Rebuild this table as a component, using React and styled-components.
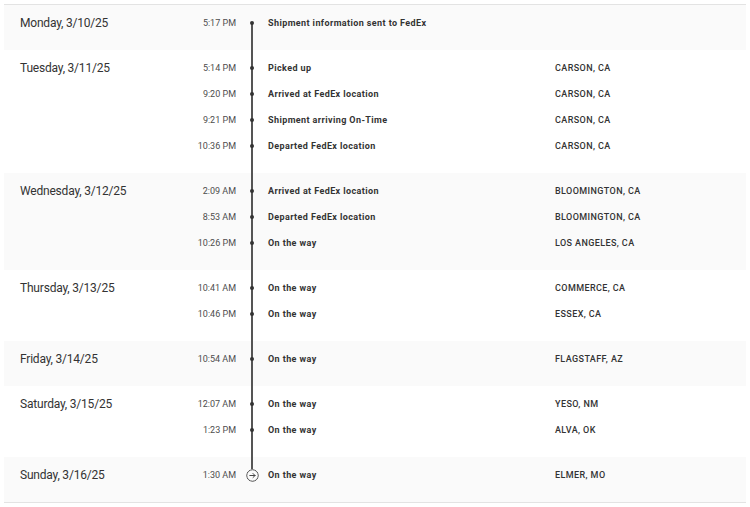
import styled, { createGlobalStyle } from 'styled-components';

const Global = createGlobalStyle`
  body {
    margin: 0;
    background: #fff;
    font-family: Roboto, "Liberation Sans", sans-serif;
  }
`

const Page = styled.div`
  padding: 4px 4px 0 4px;
`

const Table = styled.div`
  border-top: 1px solid #e3e3e3;
  border-bottom: 1px solid #e3e3e3;
`

const Section = styled.div`
  display: flex;
  background: ${p => (p.$shaded ? '#fafafa' : '#fff')};
  padding: 9.5px 0 18.5px 16px;
`

const DateCell = styled.div`
  width: 140px;
  height: 17px;
  display: flex;
  align-items: center;
  font-size: 12px;
  letter-spacing: -0.2px;
  color: #333;
`

const Rows = styled.div`
  flex: 1;
  display: flex;
  flex-direction: column;
  gap: 9px;
`

const Row = styled.div`
  display: grid;
  grid-template-columns: 76px 32px 287px 1fr;
  height: 17px;
  align-items: center;
  font-size: 9px;
  color: #333;
`

const Time = styled.div`
  text-align: right;
  color: #4d4d4d;
`

const Marker = styled.div`
  position: relative;
  height: 100%;
  display: flex;
  align-items: center;
  justify-content: center;

  &::after {
    content: '';
    display: ${p => (p.$tail ? 'block' : 'none')};
    position: absolute;
    left: 15.25px;
    top: 50%;
    width: 1.5px;
    height: ${p => p.$tail}px;
    background: #555;
  }
`

const Dot = styled.span`
  width: 4px;
  height: 4px;
  border-radius: 50%;
  background: #333;
  position: relative;
  z-index: 1;
`

const EndIcon = styled.svg`
  position: relative;
  z-index: 1;
  background: #fafafa;
  border-radius: 50%;
`

const Event = styled.div`
  font-weight: 700;
  letter-spacing: 0.4px;
  color: #333;
`

const Location = styled.div`
  font-weight: 500;
  letter-spacing: 0.4px;
  color: #333;
  text-transform: uppercase;
`

const days = [
  ['Monday, 3/10/25', [['5:17 PM', 'Shipment information sent to FedEx', '']]],
  ['Tuesday, 3/11/25', [
    ['5:14 PM', 'Picked up', 'CARSON, CA'],
    ['9:20 PM', 'Arrived at FedEx location', 'CARSON, CA'],
    ['9:21 PM', 'Shipment arriving On-Time', 'CARSON, CA'],
    ['10:36 PM', 'Departed FedEx location', 'CARSON, CA'],
  ]],
  ['Wednesday, 3/12/25', [
    ['2:09 AM', 'Arrived at FedEx location', 'BLOOMINGTON, CA'],
    ['8:53 AM', 'Departed FedEx location', 'BLOOMINGTON, CA'],
    ['10:26 PM', 'On the way', 'LOS ANGELES, CA'],
  ]],
  ['Thursday, 3/13/25', [
    ['10:41 AM', 'On the way', 'COMMERCE, CA'],
    ['10:46 PM', 'On the way', 'ESSEX, CA'],
  ]],
  ['Friday, 3/14/25', [['10:54 AM', 'On the way', 'FLAGSTAFF, AZ']]],
  ['Saturday, 3/15/25', [
    ['12:07 AM', 'On the way', 'YESO, NM'],
    ['1:23 PM', 'On the way', 'ALVA, OK'],
  ]],
  ['Sunday, 3/16/25', [['1:30 AM', 'On the way', 'ELMER, MO']]],
]

function App() {
  return (
    <Page>
      <Global />
      <Table>
        {days.map(([date, events], d) => {
          const lastDay = d === days.length - 1
          return (
            <Section key={date} $shaded={d % 2 === 0}>
              <DateCell>{date}</DateCell>
              <Rows>
                {events.map(([time, text, place], i) => {
                  const lastRow = i === events.length - 1
                  const tail = lastDay && lastRow ? 0 : lastRow ? 45 : 26
                  return (
                    <Row key={time + i}>
                      <Time>{time}</Time>
                      <Marker $tail={tail}>
                        {lastDay && lastRow ? (
                          <EndIcon width="13" height="13" viewBox="0 0 13 13">
                            <circle cx="6.5" cy="6.5" r="5.8" fill="none" stroke="#444" strokeWidth="1" />
                            <path d="M3.8 6.5h5.2M7 4.5l2 2-2 2" fill="none" stroke="#444" strokeWidth="1" strokeLinecap="round" strokeLinejoin="round" />
                          </EndIcon>
                        ) : (
                          <Dot />
                        )}
                      </Marker>
                      <Event>{text}</Event>
                      <Location>{place}</Location>
                    </Row>
                  )
                })}
              </Rows>
            </Section>
          )
        })}
      </Table>
    </Page>
  );
}

export default App;
